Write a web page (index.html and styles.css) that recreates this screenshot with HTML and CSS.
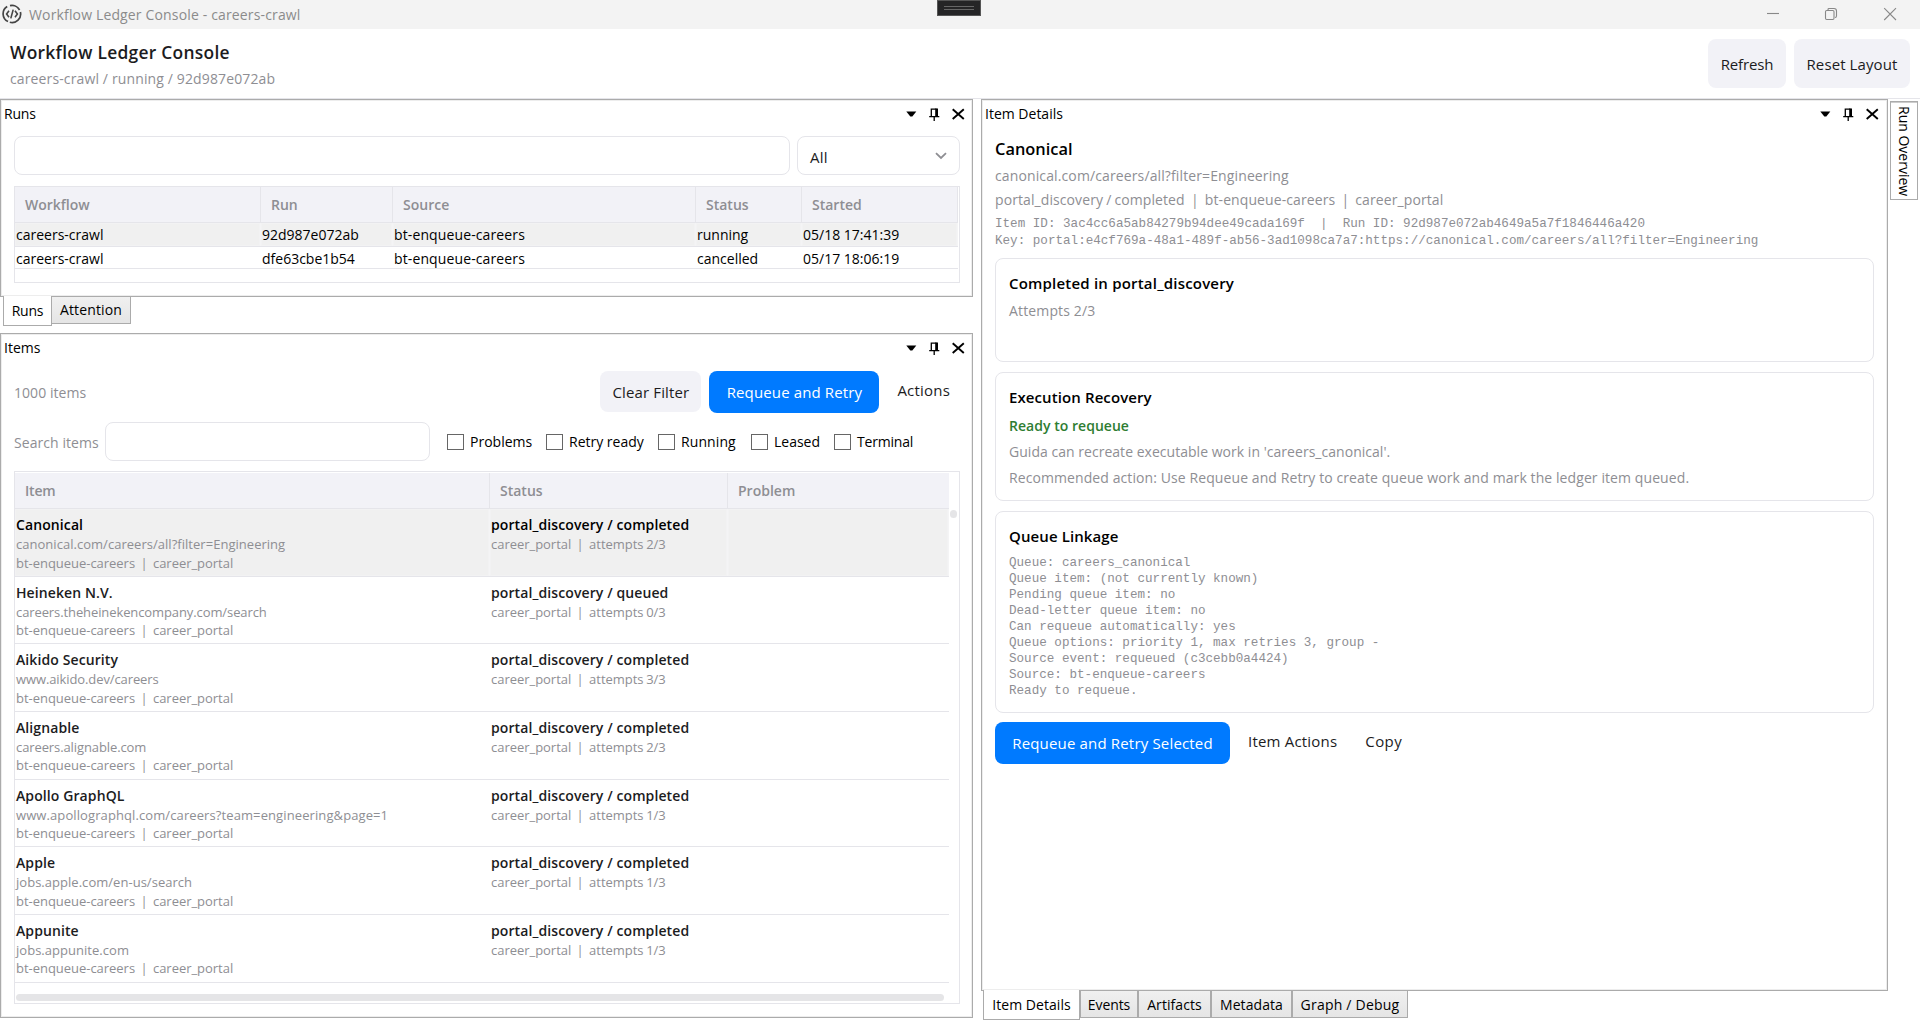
FILE: index.html
```html
<!DOCTYPE html>
<html lang="en">
<head>
<meta charset="utf-8">
<title>Workflow Ledger Console - careers-crawl</title>
<link rel="stylesheet" href="styles.css">
</head>
<body>
<svg class="defs" width="0" height="0">
  <symbol id="tools" viewBox="0 0 60 14">
    <path d="M0.3 4.5H10.3L6.3 9.5H4.3Z"/>
    <path d="M25.3 9.6V2.1H30.5M23.2 9.7H33.3M28.2 10V14" fill="none" stroke="#000" stroke-width="1.3"/>
    <path d="M29.2 1.5H32V9.6H29.2Z"/>
    <path d="M46.7 2.2L57.8 12M57.8 2.2L46.7 12" fill="none" stroke="#000" stroke-width="1.9"/>
  </symbol>
</svg>

<header class="titlebar">
  <svg class="app-icon" viewBox="0 0 20 20" width="20" height="20" fill="none" stroke="#444" stroke-width="1.7">
    <path d="M5.2 2.5A8.6 8.6 0 0 0 6 17.6M8 1.6A8.6 8.6 0 0 1 17.6 6M18.4 8A8.6 8.6 0 0 1 7.8 18.3"/>
    <path d="M7 6.8L4.6 10L7 13.2M13 6.8L15.4 10L13 13.2M11.2 5.6L8.8 14.4" stroke-width="1.6"/>
  </svg>
  <span class="window-title">Workflow Ledger Console - careers-crawl</span>
  <svg class="window-buttons" viewBox="0 0 130 14" width="130" height="14" fill="none" stroke="#888" stroke-width="1.1">
    <path d="M0 6.5H12"/>
    <rect x="58.5" y="3.5" width="8.5" height="9" rx="1.2"/>
    <path d="M61 3V2.4Q61 1.5 62 1.5H67Q69.5 1.5 69.5 4V9Q69.5 10.5 68 10.5"/>
    <path d="M117.2 1.2L129 13M129 1.2L117.2 13"/>
  </svg>
  <div class="debug-grip"><i></i></div>
</header>

<section class="app-header">
  <div>
    <h1>Workflow Ledger Console</h1>
    <p class="crumb">careers-crawl / running / 92d987e072ab</p>
  </div>
  <div class="header-actions">
    <button class="btn refresh">Refresh</button>
    <button class="btn reset">Reset Layout</button>
  </div>
</section>

<main class="dock">
  <div class="left">
    <section class="pane runs-pane">
      <div class="pane-title"><span class="tight">Runs</span><svg class="tools" width="60" height="14"><use href="#tools"/></svg></div>
      <div class="pane-body">
        <div class="filters">
          <div class="input"></div>
          <div class="select"><span>All</span>
            <svg width="12" height="8" viewBox="0 0 12 8" fill="none" stroke="#8e8e93" stroke-width="1.8"><path d="M1 1.2L6 6L11 1.2"/></svg>
          </div>
        </div>
        <div class="grid runs-grid">
          <div class="row head"><span>Workflow</span><span>Run</span><span>Source</span><span>Status</span><span>Started</span></div>
          <div class="row selected"><span>careers-crawl</span><span>92d987e072ab</span><span class="source">bt-enqueue-careers</span><span>running</span><span>05/18 17:41:39</span></div>
          <div class="row"><span>careers-crawl</span><span>dfe63cbe1b54</span><span class="source">bt-enqueue-careers</span><span>cancelled</span><span>05/17 18:06:19</span></div>
        </div>
      </div>
    </section>
    <nav class="tabs left-tabs"><span class="tab active tight">Runs</span><span class="tab attention">Attention</span></nav>

    <section class="pane items-pane">
      <div class="pane-title"><span>Items</span><svg class="tools" width="60" height="14"><use href="#tools"/></svg></div>
      <div class="pane-body">
        <div class="toolbar">
          <span class="count">1000 items</span>
          <button class="btn clear">Clear Filter</button>
          <button class="btn primary retry">Requeue and Retry</button>
          <span class="menu">Actions</span>
        </div>
        <div class="search">
          <label>Search items</label>
          <div class="input"></div>
          <div class="checks">
            <span class="check problems"><i></i>Problems</span>
            <span class="check ready"><i></i>Retry ready</span>
            <span class="check running"><i></i>Running</span>
            <span class="check leased"><i></i>Leased</span>
            <span class="check terminal"><i></i>Terminal</span>
          </div>
        </div>
        <div class="grid items-grid">
          <div class="row head"><span class="tight">Item</span><span>Status</span><span>Problem</span></div>
          <div class="row selected">
            <div><b>Canonical</b><small>canonical.com/careers/all?filter=Engineering</small><small class="meta">bt-enqueue-careers&nbsp; |&nbsp; career_portal</small></div>
            <div><b>portal_discovery / completed</b><small class="meta">career_portal&nbsp; |&nbsp; attempts 2/3</small></div><div></div>
          </div>
          <div class="row">
            <div><b>Heineken N.V.</b><small class="slim">careers.theheinekencompany.com/search</small><small class="meta">bt-enqueue-careers&nbsp; |&nbsp; career_portal</small></div>
            <div><b>portal_discovery / queued</b><small class="meta">career_portal&nbsp; |&nbsp; attempts 0/3</small></div><div></div>
          </div>
          <div class="row">
            <div><b>Aikido Security</b><small class="slim">www.aikido.dev/careers</small><small class="meta">bt-enqueue-careers&nbsp; |&nbsp; career_portal</small></div>
            <div><b>portal_discovery / completed</b><small class="meta">career_portal&nbsp; |&nbsp; attempts 3/3</small></div><div></div>
          </div>
          <div class="row">
            <div><b>Alignable</b><small class="slim">careers.alignable.com</small><small class="meta">bt-enqueue-careers&nbsp; |&nbsp; career_portal</small></div>
            <div><b>portal_discovery / completed</b><small class="meta">career_portal&nbsp; |&nbsp; attempts 2/3</small></div><div></div>
          </div>
          <div class="row">
            <div><b>Apollo GraphQL</b><small class="wide">www.apollographql.com/careers?team=engineering&amp;page=1</small><small class="meta">bt-enqueue-careers&nbsp; |&nbsp; career_portal</small></div>
            <div><b>portal_discovery / completed</b><small class="meta">career_portal&nbsp; |&nbsp; attempts 1/3</small></div><div></div>
          </div>
          <div class="row">
            <div><b>Apple</b><small>jobs.apple.com/en-us/search</small><small class="meta">bt-enqueue-careers&nbsp; |&nbsp; career_portal</small></div>
            <div><b>portal_discovery / completed</b><small class="meta">career_portal&nbsp; |&nbsp; attempts 1/3</small></div><div></div>
          </div>
          <div class="row">
            <div><b>Appunite</b><small>jobs.appunite.com</small><small class="meta">bt-enqueue-careers&nbsp; |&nbsp; career_portal</small></div>
            <div><b>portal_discovery / completed</b><small class="meta">career_portal&nbsp; |&nbsp; attempts 1/3</small></div><div></div>
          </div>
          <i class="v-thumb"></i>
          <i class="h-thumb"></i>
        </div>
      </div>
    </section>
  </div>

  <div class="right">
    <section class="pane details-pane">
      <div class="pane-title"><span>Item Details</span><svg class="tools" width="60" height="14"><use href="#tools"/></svg></div>
      <div class="details">
        <h2>Canonical</h2>
        <p class="url">canonical.com/careers/all?filter=Engineering</p>
        <p class="facts">portal_discovery / completed&nbsp; |&nbsp; bt-enqueue-careers&nbsp; |&nbsp; career_portal</p>
        <pre class="ids">Item ID: 3ac4cc6a5ab84279b94dee49cada169f  |  Run ID: 92d987e072ab4649a5a7f1846446a420
Key: portal:e4cf769a-48a1-489f-ab56-3ad1098ca7a7:https://canonical.com/careers/all?filter=Engineering</pre>
        <article class="card completed">
          <h3>Completed in portal_discovery</h3>
          <p class="attempts">Attempts 2/3</p>
        </article>
        <article class="card recovery">
          <h3 class="mid">Execution Recovery</h3>
          <p class="ok">Ready to requeue</p>
          <p>Guida can recreate executable work in 'careers_canonical'.</p>
          <p class="recommend">Recommended action: Use Requeue and Retry to create queue work and mark the ledger item queued.</p>
        </article>
        <article class="card linkage">
          <h3 class="mid">Queue Linkage</h3>
<pre>Queue: careers_canonical
Queue item: (not currently known)
Pending queue item: no
Dead-letter queue item: no
Can requeue automatically: yes
Queue options: priority 1, max retries 3, group -
Source event: requeued (c3cebb0a4424)
Source: bt-enqueue-careers
Ready to requeue.</pre>
        </article>
        <div class="detail-actions">
          <button class="btn primary selected-retry">Requeue and Retry Selected</button>
          <span class="menu">Item Actions</span>
          <span class="menu copy">Copy</span>
        </div>
      </div>
    </section>
    <nav class="tabs right-tabs"><span class="tab active">Item Details</span><span class="tab events">Events</span><span class="tab artifacts">Artifacts</span><span class="tab metadata">Metadata</span><span class="tab graph">Graph / Debug</span></nav>
  </div>

  <aside class="side"><span class="side-tab">Run Overview</span></aside>
</main>
</body>
</html>
```
FILE: styles.css
```css
* { box-sizing: border-box; }

body {
  margin: 0;
  width: 1920px;
  height: 1020px;
  overflow: hidden;
  display: flex;
  flex-direction: column;
  background: #fff;
  color: #000;
  font: 14px/20px "Open Sans", "Noto Sans", sans-serif;
  white-space: nowrap;
}

h1, h2, h3, p, pre { margin: 0; }
h1, h2, h3, b { font-weight: 600; }
i { font-style: normal; }
.defs { position: absolute; }
.tight { letter-spacing: -.2px; }

/* window title bar */
.titlebar {
  position: relative;
  flex: 0 0 29px;
  display: flex;
  align-items: center;
  padding: 0 23px 0 2px;
  background: #f3f3f3;
}
.app-icon { margin-top: -1px; }
.window-title { margin-left: 7px; color: #8b8b8b; letter-spacing: .15px; }
.window-buttons { margin-left: auto; margin-top: -1px; }
.debug-grip {
  position: absolute;
  left: 937px;
  top: 0;
  width: 44px;
  height: 16px;
  padding: 5px 6px;
  background: #252526;
  border: 1px solid #555;
}
.debug-grip i {
  display: block;
  height: 4px;
  border: solid #666;
  border-width: 1px 0;
}

/* application header */
.app-header {
  flex: 0 0 70px;
  display: flex;
  justify-content: space-between;
  padding: 10px 10px 0;
  border-bottom: 1px solid #e5e5ea;
}
h1 { margin-top: 1px; font-size: 17.4px; line-height: 24px; letter-spacing: .27px; color: #1c1c1e; }
.crumb { margin-top: 5px; color: #8e8e93; letter-spacing: .13px; }
.header-actions { display: flex; gap: 8px; }

.btn {
  height: 49px;
  padding: 0;
  border: 0;
  border-radius: 8px;
  background: #f2f2f7;
  color: #1c1c1e;
  font: 15px/20px "Open Sans", "Noto Sans", sans-serif;
  text-align: center;
}
.refresh { width: 78px; letter-spacing: -.15px; }
.reset { width: 116px; letter-spacing: .1px; }
.primary { background: #007aff; color: #fff; }
.menu { font-size: 15px; color: #1c1c1e; letter-spacing: .2px; }

/* dock layout */
.dock { flex: 1; display: grid; grid-template-columns: 973px 8px 907px 32px; }
.left { grid-column: 1; }
.right { grid-column: 3; }
.side { grid-column: 4; padding: 2px 0 0 2px; }

.pane { border: 1px solid #ababab; box-shadow: inset 0 0 0 1px #ededed; }
.pane-title {
  display: flex;
  justify-content: space-between;
  align-items: center;
  height: 27px;
  padding: 0 6px 0 3px;
}
.pane-body { padding: 0 12px 0 13px; }
.runs-pane { height: 198px; }
.items-pane { height: 685px; margin-top: 8px; }
.details-pane { height: 892px; }
.details-pane .pane-title { padding-right: 7px; }

.input, .select { height: 39px; border: 1px solid #e5e5ea; border-radius: 8px; }

.filters { display: flex; gap: 7px; padding-top: 9px; }
.filters .input { flex: 1; }
.select {
  width: 163px;
  display: flex;
  align-items: center;
  justify-content: space-between;
  padding: 2px 12px 0 12px;
  font-size: 15px;
  color: #1c1c1e;
}
.select span { letter-spacing: .3px; }
.select svg { margin-top: -2px; }

/* tables */
.grid { position: relative; border: 1px solid #e5e5ea; }
.row { display: grid; border-bottom: 1px solid #e5e5ea; }
.row > * { padding-left: 1px; border-right: 1px solid transparent; }
.row.head > * { padding-left: 10px; border-color: #e5e5ea; }
.head { background: #f2f2f7; color: #8e8e93; font-weight: 600; }
.row.selected { background: #f0f0f0; }
.row.selected > * { border-color: #f4f4f5; box-shadow: inset 0 0 0 1px #f2f2f3; }

.runs-grid { height: 97px; margin-top: 11px; }
.runs-grid .row { width: 943px; height: 22px; grid-template-columns: 246px 132px 303px 106px 156px; line-height: 23px; }
.runs-grid .row.head { height: 36px; line-height: 36px; }
.runs-grid .row.selected { height: 24px; line-height: 23px; }
.runs-grid .source { letter-spacing: .12px; }

.items-grid { height: 533px; margin-top: 10px; padding-top: 1px; }
.items-grid .row { width: 934px; height: 67.67px; grid-template-columns: 475px 238px 221px; }
.items-grid .row.head { height: 36px; line-height: 35px; }
.items-grid .head > :last-child { border: 0; }
.items-grid .row > div { padding-top: 6px; color: #1c1c1e; }
.items-grid b { display: block; letter-spacing: .1px; line-height: 20px; }
.items-grid .row.selected b { color: #000; }
small { display: block; font-size: 13px; line-height: 18.5px; color: #8e8e93; letter-spacing: .03px; }
small.meta { letter-spacing: -.03px; word-spacing: -.65px; }
small.slim { letter-spacing: -.1px; }
small.wide { letter-spacing: .1px; }
.v-thumb, .h-thumb { position: absolute; background: #e5e5e7; border-radius: 4px; }
.v-thumb { left: 935px; top: 38px; width: 7px; height: 8px; }
.h-thumb { left: 1px; top: 522px; width: 928px; height: 7px; }

/* item toolbar and filters */
.toolbar { display: flex; align-items: center; padding: 9px 10px 0 0; height: 52px; }
.count { margin-right: auto; padding-top: 2px; color: #8e8e93; letter-spacing: .05px; }
.clear { width: 101px; height: 41px; letter-spacing: .13px; }
.retry { width: 170px; height: 42px; margin: 0 18px 0 8px; letter-spacing: .13px; }
.toolbar .menu { margin-top: -4px; }
.search { display: flex; align-items: center; margin-top: 9px; color: #8e8e93; }
.search label { width: 91px; padding-top: 2px; letter-spacing: .07px; }
.search .input { width: 325px; }
.checks { display: flex; margin-left: 17px; color: #000; }
.check { display: flex; align-items: center; }
.check i { width: 17px; height: 16px; margin-right: 6px; border: 1px solid #666; background: #fff; }
.problems { width: 99px; }
.ready { width: 112px; }
.running { width: 93px; letter-spacing: .1px; }
.leased { width: 83px; }
.terminal { letter-spacing: -.2px; }

/* tab strips */
.tabs { display: flex; align-items: flex-start; height: 28px; }
.tab {
  height: 27px;
  padding-top: 2px;
  border: 1px solid #ababab;
  border-top: 0;
  text-align: center;
  background: linear-gradient(#f0f0f0, #e5e5e5);
}
.tab.active { position: relative; height: 30px; margin-top: -1px; padding-top: 5px; background: #fff; }
.left-tabs { padding-left: 3px; }
.left-tabs .active { width: 49px; }
.left-tabs .tab:not(.active) { padding-top: 3px; }
.attention { width: 80px; margin-left: -1px; letter-spacing: .15px; }
.right-tabs { padding-left: 2px; }
.right-tabs .active { width: 97px; letter-spacing: .05px; }
.right-tabs .tab:not(.active) { padding-top: 4px; }
.events { width: 58px; letter-spacing: -.1px; }
.artifacts { width: 73px; letter-spacing: .08px; }
.metadata { width: 81px; letter-spacing: .08px; }
.graph { width: 116px; letter-spacing: .22px; }

/* item details */
.details { padding: 11px 13px 0 13px; color: #8e8e93; }
h2 { font-size: 16.4px; line-height: 22px; color: #000; }
.url { margin-top: 6px; letter-spacing: .12px; }
.facts { margin-top: 4px; letter-spacing: .09px; word-spacing: -.65px; }
pre { font: 12.6px/16px "Liberation Mono", monospace; }
.ids { margin-top: 6px; line-height: 17px; }
.card { border: 1px solid #e5e5ea; border-radius: 8px; padding: 14px 13px 0; }
.card h3 { font-size: 15px; line-height: 20px; color: #000; letter-spacing: .2px; }
.card h3.mid { letter-spacing: .1px; }
.completed { height: 104px; margin-top: 8px; }
.attempts { margin-top: 8px; letter-spacing: .15px; }
.recovery { height: 129px; margin-top: 10px; }
.recovery p { margin-top: 6px; letter-spacing: .03px; }
.recovery .ok { margin-top: 9px; color: #2e7d32; font-weight: 600; }
.recovery .recommend { letter-spacing: .09px; }
.linkage { height: 202px; margin-top: 10px; }
.linkage pre { margin-top: 9px; }
.detail-actions { display: flex; align-items: center; margin-top: 9px; }
.selected-retry { width: 235px; height: 42px; margin-right: 18px; letter-spacing: .17px; }
.detail-actions .menu { margin-top: -4px; }
.detail-actions .copy { margin-left: 28px; letter-spacing: .4px; }

.side-tab {
  display: block;
  width: 28px;
  height: 99px;
  padding: 4px 3px 0;
  border: 1px solid #ababab;
  box-shadow: inset 0 1px 0 #ccc;
  writing-mode: vertical-rl;
}
```
